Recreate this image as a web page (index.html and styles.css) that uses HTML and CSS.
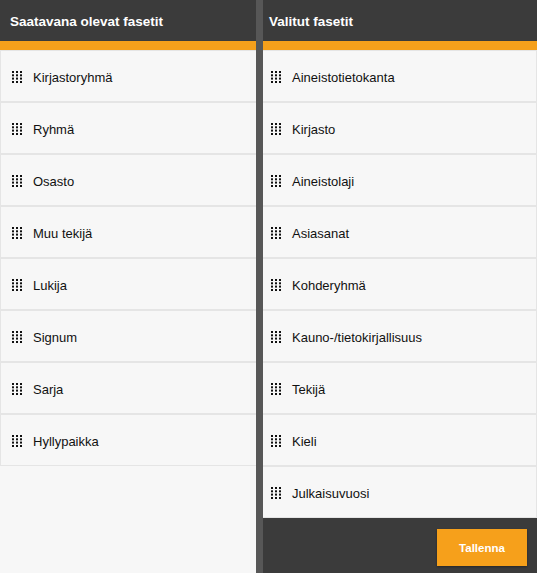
FILE: index.html
```html
<!DOCTYPE html>
<html lang="fi">
<head>
<meta charset="utf-8">
<title>Fasetit</title>
<link rel="stylesheet" href="styles.css">
</head>
<body>
<div class="board">
  <section class="panel panel-left">
    <header class="panel-head"><h2 class="panel-title">Saatavana olevat fasetit</h2></header>
    <ul class="facet-list">
      <li class="facet"><svg class="grip" viewBox="0 0 10 12"><g fill="#111"><rect x="0" y="0" width="2" height="2"/><rect x="4" y="0" width="2" height="2"/><rect x="8" y="0" width="2" height="2"/><rect x="0" y="3.3" width="2" height="2"/><rect x="4" y="3.3" width="2" height="2"/><rect x="8" y="3.3" width="2" height="2"/><rect x="0" y="6.6" width="2" height="2"/><rect x="4" y="6.6" width="2" height="2"/><rect x="8" y="6.6" width="2" height="2"/><rect x="0" y="10" width="2" height="2"/><rect x="4" y="10" width="2" height="2"/><rect x="8" y="10" width="2" height="2"/></g></svg><span>Kirjastoryhmä</span></li>
      <li class="facet"><svg class="grip" viewBox="0 0 10 12"><g fill="#111"><rect x="0" y="0" width="2" height="2"/><rect x="4" y="0" width="2" height="2"/><rect x="8" y="0" width="2" height="2"/><rect x="0" y="3.3" width="2" height="2"/><rect x="4" y="3.3" width="2" height="2"/><rect x="8" y="3.3" width="2" height="2"/><rect x="0" y="6.6" width="2" height="2"/><rect x="4" y="6.6" width="2" height="2"/><rect x="8" y="6.6" width="2" height="2"/><rect x="0" y="10" width="2" height="2"/><rect x="4" y="10" width="2" height="2"/><rect x="8" y="10" width="2" height="2"/></g></svg><span>Ryhmä</span></li>
      <li class="facet"><svg class="grip" viewBox="0 0 10 12"><g fill="#111"><rect x="0" y="0" width="2" height="2"/><rect x="4" y="0" width="2" height="2"/><rect x="8" y="0" width="2" height="2"/><rect x="0" y="3.3" width="2" height="2"/><rect x="4" y="3.3" width="2" height="2"/><rect x="8" y="3.3" width="2" height="2"/><rect x="0" y="6.6" width="2" height="2"/><rect x="4" y="6.6" width="2" height="2"/><rect x="8" y="6.6" width="2" height="2"/><rect x="0" y="10" width="2" height="2"/><rect x="4" y="10" width="2" height="2"/><rect x="8" y="10" width="2" height="2"/></g></svg><span>Osasto</span></li>
      <li class="facet"><svg class="grip" viewBox="0 0 10 12"><g fill="#111"><rect x="0" y="0" width="2" height="2"/><rect x="4" y="0" width="2" height="2"/><rect x="8" y="0" width="2" height="2"/><rect x="0" y="3.3" width="2" height="2"/><rect x="4" y="3.3" width="2" height="2"/><rect x="8" y="3.3" width="2" height="2"/><rect x="0" y="6.6" width="2" height="2"/><rect x="4" y="6.6" width="2" height="2"/><rect x="8" y="6.6" width="2" height="2"/><rect x="0" y="10" width="2" height="2"/><rect x="4" y="10" width="2" height="2"/><rect x="8" y="10" width="2" height="2"/></g></svg><span>Muu tekijä</span></li>
      <li class="facet"><svg class="grip" viewBox="0 0 10 12"><g fill="#111"><rect x="0" y="0" width="2" height="2"/><rect x="4" y="0" width="2" height="2"/><rect x="8" y="0" width="2" height="2"/><rect x="0" y="3.3" width="2" height="2"/><rect x="4" y="3.3" width="2" height="2"/><rect x="8" y="3.3" width="2" height="2"/><rect x="0" y="6.6" width="2" height="2"/><rect x="4" y="6.6" width="2" height="2"/><rect x="8" y="6.6" width="2" height="2"/><rect x="0" y="10" width="2" height="2"/><rect x="4" y="10" width="2" height="2"/><rect x="8" y="10" width="2" height="2"/></g></svg><span>Lukija</span></li>
      <li class="facet"><svg class="grip" viewBox="0 0 10 12"><g fill="#111"><rect x="0" y="0" width="2" height="2"/><rect x="4" y="0" width="2" height="2"/><rect x="8" y="0" width="2" height="2"/><rect x="0" y="3.3" width="2" height="2"/><rect x="4" y="3.3" width="2" height="2"/><rect x="8" y="3.3" width="2" height="2"/><rect x="0" y="6.6" width="2" height="2"/><rect x="4" y="6.6" width="2" height="2"/><rect x="8" y="6.6" width="2" height="2"/><rect x="0" y="10" width="2" height="2"/><rect x="4" y="10" width="2" height="2"/><rect x="8" y="10" width="2" height="2"/></g></svg><span>Signum</span></li>
      <li class="facet"><svg class="grip" viewBox="0 0 10 12"><g fill="#111"><rect x="0" y="0" width="2" height="2"/><rect x="4" y="0" width="2" height="2"/><rect x="8" y="0" width="2" height="2"/><rect x="0" y="3.3" width="2" height="2"/><rect x="4" y="3.3" width="2" height="2"/><rect x="8" y="3.3" width="2" height="2"/><rect x="0" y="6.6" width="2" height="2"/><rect x="4" y="6.6" width="2" height="2"/><rect x="8" y="6.6" width="2" height="2"/><rect x="0" y="10" width="2" height="2"/><rect x="4" y="10" width="2" height="2"/><rect x="8" y="10" width="2" height="2"/></g></svg><span>Sarja</span></li>
      <li class="facet"><svg class="grip" viewBox="0 0 10 12"><g fill="#111"><rect x="0" y="0" width="2" height="2"/><rect x="4" y="0" width="2" height="2"/><rect x="8" y="0" width="2" height="2"/><rect x="0" y="3.3" width="2" height="2"/><rect x="4" y="3.3" width="2" height="2"/><rect x="8" y="3.3" width="2" height="2"/><rect x="0" y="6.6" width="2" height="2"/><rect x="4" y="6.6" width="2" height="2"/><rect x="8" y="6.6" width="2" height="2"/><rect x="0" y="10" width="2" height="2"/><rect x="4" y="10" width="2" height="2"/><rect x="8" y="10" width="2" height="2"/></g></svg><span>Hyllypaikka</span></li>
    </ul>
  </section>
  <section class="panel panel-right">
    <header class="panel-head"><h2 class="panel-title">Valitut fasetit</h2></header>
    <ul class="facet-list">
      <li class="facet"><svg class="grip" viewBox="0 0 10 12"><g fill="#111"><rect x="0" y="0" width="2" height="2"/><rect x="4" y="0" width="2" height="2"/><rect x="8" y="0" width="2" height="2"/><rect x="0" y="3.3" width="2" height="2"/><rect x="4" y="3.3" width="2" height="2"/><rect x="8" y="3.3" width="2" height="2"/><rect x="0" y="6.6" width="2" height="2"/><rect x="4" y="6.6" width="2" height="2"/><rect x="8" y="6.6" width="2" height="2"/><rect x="0" y="10" width="2" height="2"/><rect x="4" y="10" width="2" height="2"/><rect x="8" y="10" width="2" height="2"/></g></svg><span>Aineistotietokanta</span></li>
      <li class="facet"><svg class="grip" viewBox="0 0 10 12"><g fill="#111"><rect x="0" y="0" width="2" height="2"/><rect x="4" y="0" width="2" height="2"/><rect x="8" y="0" width="2" height="2"/><rect x="0" y="3.3" width="2" height="2"/><rect x="4" y="3.3" width="2" height="2"/><rect x="8" y="3.3" width="2" height="2"/><rect x="0" y="6.6" width="2" height="2"/><rect x="4" y="6.6" width="2" height="2"/><rect x="8" y="6.6" width="2" height="2"/><rect x="0" y="10" width="2" height="2"/><rect x="4" y="10" width="2" height="2"/><rect x="8" y="10" width="2" height="2"/></g></svg><span>Kirjasto</span></li>
      <li class="facet"><svg class="grip" viewBox="0 0 10 12"><g fill="#111"><rect x="0" y="0" width="2" height="2"/><rect x="4" y="0" width="2" height="2"/><rect x="8" y="0" width="2" height="2"/><rect x="0" y="3.3" width="2" height="2"/><rect x="4" y="3.3" width="2" height="2"/><rect x="8" y="3.3" width="2" height="2"/><rect x="0" y="6.6" width="2" height="2"/><rect x="4" y="6.6" width="2" height="2"/><rect x="8" y="6.6" width="2" height="2"/><rect x="0" y="10" width="2" height="2"/><rect x="4" y="10" width="2" height="2"/><rect x="8" y="10" width="2" height="2"/></g></svg><span>Aineistolaji</span></li>
      <li class="facet"><svg class="grip" viewBox="0 0 10 12"><g fill="#111"><rect x="0" y="0" width="2" height="2"/><rect x="4" y="0" width="2" height="2"/><rect x="8" y="0" width="2" height="2"/><rect x="0" y="3.3" width="2" height="2"/><rect x="4" y="3.3" width="2" height="2"/><rect x="8" y="3.3" width="2" height="2"/><rect x="0" y="6.6" width="2" height="2"/><rect x="4" y="6.6" width="2" height="2"/><rect x="8" y="6.6" width="2" height="2"/><rect x="0" y="10" width="2" height="2"/><rect x="4" y="10" width="2" height="2"/><rect x="8" y="10" width="2" height="2"/></g></svg><span>Asiasanat</span></li>
      <li class="facet"><svg class="grip" viewBox="0 0 10 12"><g fill="#111"><rect x="0" y="0" width="2" height="2"/><rect x="4" y="0" width="2" height="2"/><rect x="8" y="0" width="2" height="2"/><rect x="0" y="3.3" width="2" height="2"/><rect x="4" y="3.3" width="2" height="2"/><rect x="8" y="3.3" width="2" height="2"/><rect x="0" y="6.6" width="2" height="2"/><rect x="4" y="6.6" width="2" height="2"/><rect x="8" y="6.6" width="2" height="2"/><rect x="0" y="10" width="2" height="2"/><rect x="4" y="10" width="2" height="2"/><rect x="8" y="10" width="2" height="2"/></g></svg><span>Kohderyhmä</span></li>
      <li class="facet"><svg class="grip" viewBox="0 0 10 12"><g fill="#111"><rect x="0" y="0" width="2" height="2"/><rect x="4" y="0" width="2" height="2"/><rect x="8" y="0" width="2" height="2"/><rect x="0" y="3.3" width="2" height="2"/><rect x="4" y="3.3" width="2" height="2"/><rect x="8" y="3.3" width="2" height="2"/><rect x="0" y="6.6" width="2" height="2"/><rect x="4" y="6.6" width="2" height="2"/><rect x="8" y="6.6" width="2" height="2"/><rect x="0" y="10" width="2" height="2"/><rect x="4" y="10" width="2" height="2"/><rect x="8" y="10" width="2" height="2"/></g></svg><span>Kauno-/tietokirjallisuus</span></li>
      <li class="facet"><svg class="grip" viewBox="0 0 10 12"><g fill="#111"><rect x="0" y="0" width="2" height="2"/><rect x="4" y="0" width="2" height="2"/><rect x="8" y="0" width="2" height="2"/><rect x="0" y="3.3" width="2" height="2"/><rect x="4" y="3.3" width="2" height="2"/><rect x="8" y="3.3" width="2" height="2"/><rect x="0" y="6.6" width="2" height="2"/><rect x="4" y="6.6" width="2" height="2"/><rect x="8" y="6.6" width="2" height="2"/><rect x="0" y="10" width="2" height="2"/><rect x="4" y="10" width="2" height="2"/><rect x="8" y="10" width="2" height="2"/></g></svg><span>Tekijä</span></li>
      <li class="facet"><svg class="grip" viewBox="0 0 10 12"><g fill="#111"><rect x="0" y="0" width="2" height="2"/><rect x="4" y="0" width="2" height="2"/><rect x="8" y="0" width="2" height="2"/><rect x="0" y="3.3" width="2" height="2"/><rect x="4" y="3.3" width="2" height="2"/><rect x="8" y="3.3" width="2" height="2"/><rect x="0" y="6.6" width="2" height="2"/><rect x="4" y="6.6" width="2" height="2"/><rect x="8" y="6.6" width="2" height="2"/><rect x="0" y="10" width="2" height="2"/><rect x="4" y="10" width="2" height="2"/><rect x="8" y="10" width="2" height="2"/></g></svg><span>Kieli</span></li>
      <li class="facet"><svg class="grip" viewBox="0 0 10 12"><g fill="#111"><rect x="0" y="0" width="2" height="2"/><rect x="4" y="0" width="2" height="2"/><rect x="8" y="0" width="2" height="2"/><rect x="0" y="3.3" width="2" height="2"/><rect x="4" y="3.3" width="2" height="2"/><rect x="8" y="3.3" width="2" height="2"/><rect x="0" y="6.6" width="2" height="2"/><rect x="4" y="6.6" width="2" height="2"/><rect x="8" y="6.6" width="2" height="2"/><rect x="0" y="10" width="2" height="2"/><rect x="4" y="10" width="2" height="2"/><rect x="8" y="10" width="2" height="2"/></g></svg><span>Julkaisuvuosi</span></li>
    </ul>
    <footer class="panel-foot"><button class="btn-save" type="button">Tallenna</button></footer>
  </section>
  <div class="divider"></div>
</div>
</body>
</html>
```

FILE: styles.css
```css
* { box-sizing: border-box; }
html, body { margin: 0; padding: 0; }
body {
  font-family: "Liberation Sans", Arial, sans-serif;
  background: #f7f7f7;
  color: #111;
}
.board {
  position: relative;
  display: grid;
  grid-template-columns: 259px 1fr;
  width: 537px;
  height: 573px;
  overflow: hidden;
}
.panel {
  display: flex;
  flex-direction: column;
  min-height: 0;
  background: #f7f7f7;
}
.panel-head {
  height: 50px;
  background: #3b3b3b;
  border-bottom: 9px solid #f6a01b;
  display: flex;
  align-items: center;
  padding: 2px 10px 0;
  flex: none;
}
.panel-title {
  margin: 0;
  font-size: 13.5px;
  font-weight: bold;
  color: #fff;
  line-height: 1;
}
.facet-list {
  list-style: none;
  margin: 0;
  padding: 0;
  flex: 1;
}
.facet {
  height: 52px;
  display: flex;
  align-items: center;
  gap: 11px;
  padding: 2px 0 0 11px;
  background: #f7f7f7;
  border: 1px solid #e5e5e5;
  font-size: 13px;
}
.grip {
  width: 10px;
  height: 12px;
  flex: none;
}
.panel-foot {
  height: 56px;
  background: #3b3b3b;
  display: flex;
  justify-content: flex-end;
  align-items: flex-start;
  padding: 11px 10px 0 0;
  flex: none;
}
.btn-save {
  width: 90px;
  height: 37px;
  background: #f6a01b;
  border: none;
  color: #fff;
  font-family: "Liberation Sans", Arial, sans-serif;
  font-weight: bold;
  font-size: 11.5px;
  box-shadow: 0 1px 2px rgba(0,0,0,0.35);
  cursor: pointer;
}
.divider {
  position: absolute;
  top: 0;
  bottom: 0;
  left: 256px;
  width: 7px;
  background: #575757;
}
```
